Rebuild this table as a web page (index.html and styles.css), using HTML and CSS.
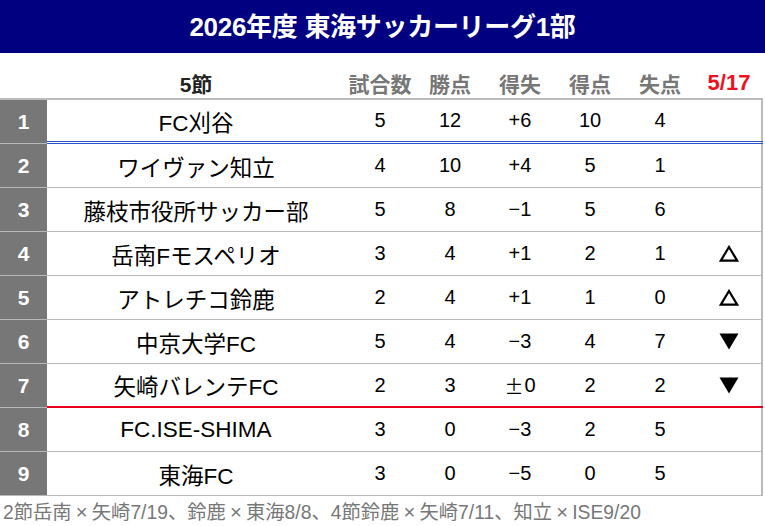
FILE: index.html
```html
<!DOCTYPE html>
<html lang="ja">
<head>
<meta charset="utf-8">
<link rel="stylesheet" href="styles.css">
</head>
<body>
<div class="page">
  <div class="title">2026年度 東海サッカーリーグ1部</div>
  <div class="row head">
    <div class="c rank-h"></div>
    <div class="c name-h">5節</div>
    <div class="c">試合数</div>
    <div class="c">勝点</div>
    <div class="c">得失</div>
    <div class="c">得点</div>
    <div class="c">失点</div>
    <div class="c date">5/17</div>
  </div>
  <div class="table">
    <div class="row body blue">
      <div class="c rank">1</div><div class="c name">FC刈谷</div>
      <div class="c n">5</div><div class="c n">12</div><div class="c n">+6</div><div class="c n">10</div><div class="c n">4</div><div class="c n mark"></div>
    </div>
    <div class="row body">
      <div class="c rank">2</div><div class="c name">ワイヴァン知立</div>
      <div class="c n">4</div><div class="c n">10</div><div class="c n">+4</div><div class="c n">5</div><div class="c n">1</div><div class="c n mark"></div>
    </div>
    <div class="row body">
      <div class="c rank">3</div><div class="c name">藤枝市役所サッカー部</div>
      <div class="c n">5</div><div class="c n">8</div><div class="c n">−1</div><div class="c n">5</div><div class="c n">6</div><div class="c n mark"></div>
    </div>
    <div class="row body">
      <div class="c rank">4</div><div class="c name">岳南Fモスペリオ</div>
      <div class="c n">3</div><div class="c n">4</div><div class="c n">+1</div><div class="c n">2</div><div class="c n">1</div>
      <div class="c n mark"><svg width="20" height="17" viewBox="0 0 20 17"><polygon points="10,2 18.2,15.6 1.8,15.6" fill="none" stroke="#000" stroke-width="2.2" stroke-linejoin="miter"/></svg></div>
    </div>
    <div class="row body">
      <div class="c rank">5</div><div class="c name">アトレチコ鈴鹿</div>
      <div class="c n">2</div><div class="c n">4</div><div class="c n">+1</div><div class="c n">1</div><div class="c n">0</div>
      <div class="c n mark"><svg width="20" height="17" viewBox="0 0 20 17"><polygon points="10,2 18.2,15.6 1.8,15.6" fill="none" stroke="#000" stroke-width="2.2" stroke-linejoin="miter"/></svg></div>
    </div>
    <div class="row body">
      <div class="c rank">6</div><div class="c name">中京大学FC</div>
      <div class="c n">5</div><div class="c n">4</div><div class="c n">−3</div><div class="c n">4</div><div class="c n">7</div>
      <div class="c n mark"><svg width="20" height="17" viewBox="0 0 20 17"><polygon points="0.5,0.5 19.5,0.5 10,16.5" fill="#000"/></svg></div>
    </div>
    <div class="row body red">
      <div class="c rank">7</div><div class="c name">矢崎バレンテFC</div>
      <div class="c n">2</div><div class="c n">3</div><div class="c n"><span class="fw">±</span>0</div><div class="c n">2</div><div class="c n">2</div>
      <div class="c n mark"><svg width="20" height="17" viewBox="0 0 20 17"><polygon points="0.5,0.5 19.5,0.5 10,16.5" fill="#000"/></svg></div>
    </div>
    <div class="row body">
      <div class="c rank">8</div><div class="c name">FC.ISE-SHIMA</div>
      <div class="c n">3</div><div class="c n">0</div><div class="c n">−3</div><div class="c n">2</div><div class="c n">5</div><div class="c n mark"></div>
    </div>
    <div class="row body">
      <div class="c rank">9</div><div class="c name">東海FC</div>
      <div class="c n">3</div><div class="c n">0</div><div class="c n">−5</div><div class="c n">0</div><div class="c n">5</div><div class="c n mark"></div>
    </div>
  </div>
  <div class="foot">2節岳南<span class="x">×</span>矢崎7/19、鈴鹿<span class="x">×</span>東海8/8、4節鈴鹿<span class="x">×</span>矢崎7/11、知立<span class="x">×</span>ISE9/20</div>
</div>
</body>
</html>
```

FILE: styles.css
```css
* { box-sizing: border-box; }
html, body { margin: 0; padding: 0; background: #fff; }
body {
  font-family: "Liberation Sans", "Noto Sans CJK JP", sans-serif;
  color: #000;
  width: 765px;
}
.title {
  height: 53px;
  background: #000080;
  color: #fff;
  font-size: 26px;
  font-weight: bold;
  text-align: center;
  line-height: 54px;
  letter-spacing: -0.3px;
}
.row {
  display: grid;
  grid-template-columns: 47px 298px 70px 70px 70px 70px 70px 68px;
}
.c {
  display: flex;
  align-items: center;
  justify-content: center;
  white-space: nowrap;
}
.head {
  height: 45px;
  align-items: end;
  color: #777;
  font-size: 21px;
  font-weight: bold;
}
.head .c { height: 30px; }
.head .name-h { color: #222; }
.head .date { color: #f0101e; font-size: 22px; }
.table {
  border-top: 2px solid #bbb;
  width: 763px;
  border-right: 2px solid #bbb;
}
.body { height: 44px; }
.body .c { border-bottom: 1px solid #bbb; }
.body .rank {
  background: #777;
  color: #fff;
  font-weight: bold;
  font-size: 21px;
  border-bottom-color: #b8b8b8;
}
.body .name { font-size: 22.5px; }
.body .n { font-size: 20px; }
.fw { font-family: "Noto Sans CJK JP", sans-serif; font-size: 19px; margin-right: 1px; }
.blue .c:not(.rank) { border-bottom: 3px double #2a55c8; }
.red .c:not(.rank) { border-bottom: 2px solid #e8001c; }
.foot {
  color: #777;
  font-size: 19.3px;
  padding: 1px 0 0 3px;
  white-space: nowrap;
}
.x {
  display: inline-block;
  width: 1em;
  text-align: center;
  font-size: 1.05em;
}
```
